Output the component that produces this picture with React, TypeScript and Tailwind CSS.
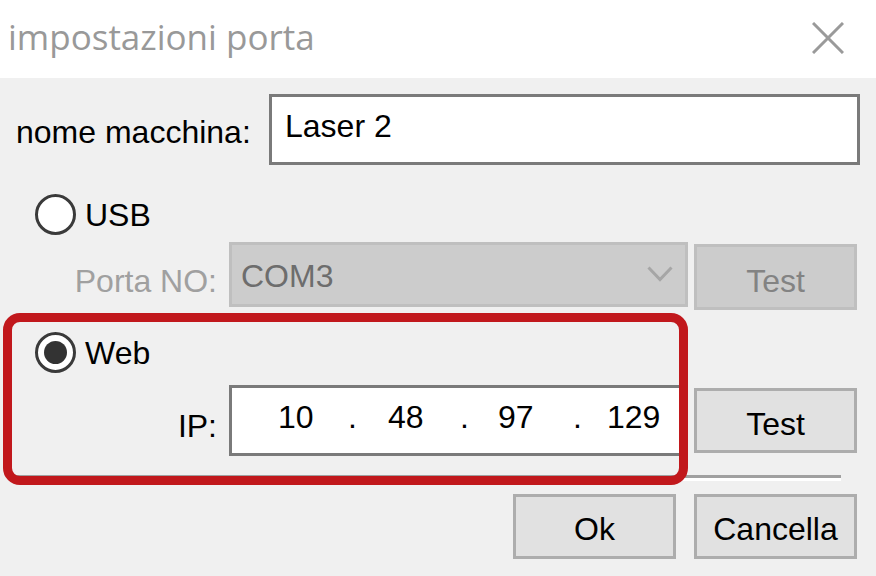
import React from "react";

const F = { fontFamily: '"Liberation Sans", Arial, sans-serif' };

function Radio({ checked }: { checked?: boolean }) {
  return (
    <div className="w-[41px] h-[41px] rounded-full border-[3px] border-[#3a3a3a] bg-white flex items-center justify-center shrink-0">
      {checked && <div className="w-[23px] h-[23px] rounded-full bg-[#333333]" />}
    </div>
  );
}

export default function App() {
  return (
    <div
      className="relative w-[876px] h-[576px] overflow-hidden bg-[#f0f0f0] text-[32px] leading-none text-black"
      style={F}
    >
      {/* title bar */}
      <div className="h-[78px] bg-white flex justify-between">
        <div
          className="pl-[8px] pt-[19px] text-[35px] leading-none text-[#999999]"
          style={{ fontFamily: '"Open Sans", "Noto Sans", sans-serif', fontWeight: 400 }}
        >
          impostazioni porta
        </div>
        <svg className="mt-[22px] mr-[32px]" width="32" height="32" viewBox="0 0 32 32">
          <path d="M1 1 L31 31 M31 1 L1 31" stroke="#9a9a9a" strokeWidth="3" fill="none" />
        </svg>
      </div>

      {/* row 1: nome macchina */}
      <div className="flex items-start mt-[16px] h-[71px]">
        <div className="w-[269px] pl-[16px] mt-[22px]">nome macchina:</div>
        <div className="w-[591px] h-[71px] border-[3px] border-[#7a7a7a] bg-white pl-[13px] pt-[13px]">
          Laser 2
        </div>
      </div>

      {/* row 2: USB */}
      <div className="flex items-center mt-[29px] pl-[35px] h-[41px] gap-[9px]">
        <Radio />
        <span>USB</span>
      </div>

      {/* row 3: Porta NO */}
      <div className="flex items-start mt-[7px] h-[68px]">
        <div className="w-[217px] text-right mt-[23px] text-[#a0a0a0]">Porta NO:</div>
        <div className="ml-[12px] w-[459px] h-[65px] bg-[#cccccc] border-[3px] border-[#bfbfbf] flex items-start justify-between pl-[9px] pr-[12px]">
          <span className="pt-[15px] text-[#6d6d6d]">COM3</span>
          <svg className="mt-[21px]" width="26" height="16" viewBox="0 0 26 16">
            <path d="M1.5 1.5 L13 13.5 L24.5 1.5" stroke="#a6a6a6" strokeWidth="3" fill="none" />
          </svg>
        </div>
        <div className="ml-[6px] mt-[2px] w-[163px] h-[66px] bg-[#cccccc] border-[3px] border-[#bfbfbf] flex justify-center pt-[18px] text-[#838383]">
          Test
        </div>
      </div>

      {/* row 4: Web */}
      <div className="flex items-center mt-[22px] pl-[35px] h-[41px] gap-[9px]">
        <Radio checked />
        <span>Web</span>
      </div>

      {/* row 5: IP */}
      <div className="flex items-start mt-[12px] h-[71px]">
        <div className="w-[217px] text-right mt-[25px]">IP:</div>
        <div className="ml-[12px] w-[456px] h-[71px] border-[3px] border-[#7a7a7a] bg-white flex items-start pl-[46px] pt-[13px]">
          <span className="w-[70px]">10</span>
          <span className="w-[40px]">.</span>
          <span className="w-[72px]">48</span>
          <span className="w-[38px]">.</span>
          <span className="w-[75px]">97</span>
          <span className="w-[34px]">.</span>
          <span>129</span>
        </div>
        <div className="ml-[9px] mt-[3px] w-[163px] h-[65px] bg-[#e1e1e1] border-[3px] border-[#adadad] flex justify-center pt-[17px]">
          Test
        </div>
      </div>

      {/* etched separator */}
      <div className="ml-[15px] mt-[19px] w-[826px] border-t-[3px] border-t-[#a0a0a0] border-b-[3px] border-b-white" />

      {/* buttons */}
      <div className="flex justify-end gap-[18px] pr-[19px] mt-[13px]">
        <div className="w-[163px] h-[65px] bg-[#e1e1e1] border-[3px] border-[#adadad] flex justify-center pt-[16px]">
          Ok
        </div>
        <div className="w-[163px] h-[65px] bg-[#e1e1e1] border-[3px] border-[#adadad] flex justify-center pt-[16px]">
          Cancella
        </div>
      </div>

      {/* red highlight annotation */}
      <div className="absolute left-[3px] top-[313px] w-[685px] h-[172px] border-[9px] border-[#c1181c] rounded-[17px] pointer-events-none" />
    </div>
  );
}
